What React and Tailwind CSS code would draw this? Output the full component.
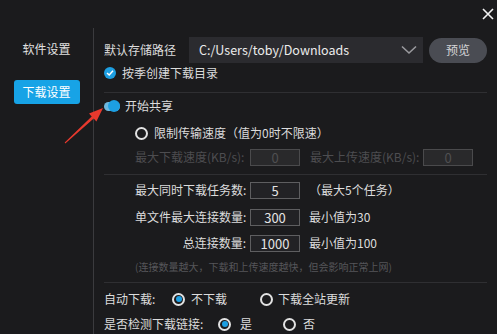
import React from "react";

/* ---------------------------------------------------------------- */
/*  small bits
/* ---------------------------------------------------------------- */
const Radio = ({ checked }) => (
  <span className="flex h-[13px] w-[13px] shrink-0 items-center justify-center rounded-full border-2 border-[#e2e2e2]">
    {checked && <span className="h-[6px] w-[6px] rounded-full bg-[#1d9fe2]" />}
  </span>
);

const NumBox = ({ value, disabled }) => (
  <div
    className={`ml-[1px] flex h-[17px] w-[50px] shrink-0 items-center justify-center border text-[13px] leading-[15px] ${
      disabled
        ? "border-[#4a4a4c] bg-[#29292b] text-[#4f4f51]"
        : "border-[#5e5e60] bg-[#222225] text-[#e4e4e4]"
    }`}
  >
    {value}
  </div>
);

const Divider = ({ className }) => (
  <div className={`h-px w-full bg-[#2f2f32] ${className}`} />
);

const Label = ({ children }) => (
  <span className="w-[114px] shrink-0 whitespace-nowrap pr-[3px] text-right">{children}</span>
);

export default function App() {
  return (
    <div className="relative h-[334px] w-[497px] overflow-hidden bg-[#1b1b1d] font-['Noto_Sans_CJK_SC','Noto_Sans',sans-serif] text-[12px] leading-[16px] text-[#dcdcdc]">
      {/* title bar */}
      <div className="flex h-[28px] items-start justify-end pr-[3px] pt-[8px]">
        <svg width="12" height="12" viewBox="0 0 12 12">
          <path d="M1 1 L11 11 M11 1 L1 11" stroke="#f2f2f2" strokeWidth="1.6" />
        </svg>
      </div>

      <div className="flex h-[306px]">
        {/* sidebar */}
        <div className="flex w-[94px] shrink-0 flex-col items-center border-r border-[#3b3b3e]">
          <div className="mt-[13px] text-[#e0e0e0]">软件设置</div>
          <div className="mt-[23px] flex h-[24px] w-[66px] items-center justify-center rounded-[3px] bg-[#17a3e6] text-white">
            下载设置
          </div>
        </div>

        {/* content */}
        <div className="flex flex-1 flex-col pl-[10px] pr-[10px]">
          <div className="mt-[9px] flex h-[26px] items-center">
            <span className="w-[85px] shrink-0">默认存储路径</span>
            <div className="flex h-[26px] w-[234px] items-center justify-between bg-[#2b2b2f] pl-[10px] pr-[6px]">
              <span className="text-[12.5px] text-[#ececec]">C:/Users/toby/Downloads</span>
              <svg width="16" height="10" viewBox="0 0 16 10">
                <path d="M1 1.5 L8 8 L15 1.5" fill="none" stroke="#9a9a9e" strokeWidth="1.6" />
              </svg>
            </div>
            <div className="ml-[6px] flex h-[25px] w-[58px] items-center justify-center rounded-full bg-[#4a4c53] text-[#d4d4d6]">
              预览
            </div>
          </div>

          <div className="flex h-[20px] items-center">
            <span className="flex h-[12px] w-[12px] items-center justify-center rounded-full bg-[#1d9fe2]">
              <svg width="8" height="8" viewBox="0 0 8 8">
                <path d="M1 4 L3.2 6 L7 1.8" fill="none" stroke="#fff" strokeWidth="1.5" />
              </svg>
            </span>
            <span className="ml-[6px]">按季创建下载目录</span>
          </div>

          <Divider className="mt-[9px]" />

          <div className="mt-[3px] flex h-[20px] items-center">
            <span className="relative h-[9px] w-[16px] rounded-full bg-[#6db7de]">
              <span className="absolute -top-[1.5px] right-0 h-[12px] w-[12px] rounded-full bg-[#1d9fe2]" />
            </span>
            <span className="ml-[5px]">开始共享</span>
          </div>

          <div className="ml-[31px] mt-[7px] flex h-[20px] items-center">
            <Radio />
            <span className="ml-[6px]">限制传输速度（值为0时不限速）</span>
          </div>

          <div className="ml-[31px] mt-[4px] flex h-[20px] items-center text-[#4d4d50]">
            <span className="w-[114px] shrink-0 whitespace-nowrap">最大下载速度(KB/s):</span>
            <NumBox value="0" disabled />
            <span className="ml-[10px] w-[112px] shrink-0 whitespace-nowrap">最大上传速度(KB/s):</span>
            <NumBox value="0" disabled />
          </div>

          <Divider className="mt-[7px]" />

          <div className="ml-[31px] mt-[5px] flex h-[20px] items-center">
            <Label>最大同时下载任务数:</Label>
            <NumBox value="5" />
            <span className="ml-[9px]">（最大5个任务）</span>
          </div>

          <div className="ml-[31px] mt-[7px] flex h-[20px] items-center">
            <Label>单文件最大连接数量:</Label>
            <NumBox value="300" />
            <span className="ml-[9px]">最小值为30</span>
          </div>

          <div className="ml-[31px] mt-[6px] flex h-[20px] items-center">
            <Label>总连接数量:</Label>
            <NumBox value="1000" />
            <span className="ml-[9px]">最小值为100</span>
          </div>

          <div className="ml-[31px] mt-[6px] flex h-[16px] items-center text-[10px] text-[#56565a]">
            (连接数量越大，下载和上传速度越快，但会影响正常上网)
          </div>

          <Divider className="mt-[7px]" />

          <div className="mt-[6px] flex h-[20px] items-center">
            <span className="w-[68px] shrink-0">自动下载:</span>
            <Radio checked />
            <span className="ml-[6px] w-[69px] shrink-0">不下载</span>
            <Radio />
            <span className="ml-[5px]">下载全站更新</span>
          </div>

          <div className="mt-[5px] flex h-[20px] items-center">
            <span className="w-[114px] shrink-0">是否检测下载链接:</span>
            <Radio checked />
            <span className="ml-[9px] w-[43px] shrink-0">是</span>
            <Radio />
            <span className="ml-[7px]">否</span>
          </div>
        </div>
      </div>

      {/* annotation arrow */}
      <svg className="absolute left-0 top-0" width="120" height="160" viewBox="0 0 120 160">
        <polygon
          points="65.3,143.4 93.7,118.6 96.4,121.4 103,108 89.0,113.6 91.7,116.4 64.7,142.6"
          fill="#e8392d"
        />
      </svg>
    </div>
  );
}
